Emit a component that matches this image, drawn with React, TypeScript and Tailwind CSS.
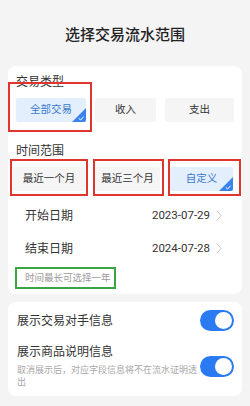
import React from "react";

const font = { fontFamily: "Roboto, 'Noto Sans CJK SC', sans-serif" };

const Corner = () => (
  <svg className="absolute bottom-0 right-0" width="14" height="14" viewBox="0 0 14 14">
    <polygon points="14,0 14,14 0,14" fill="#3a82f0" />
    <path d="M7 10.6 L8.6 12 L11.4 9" stroke="#fff" strokeWidth="1" fill="none" strokeLinecap="round" strokeLinejoin="round" />
  </svg>
);

const Chip = ({ label, active }: { label: string; active?: boolean }) => (
  <div
    className={
      "relative h-[24px] flex items-center justify-center text-[10.5px] rounded-[2px] overflow-hidden " +
      (active ? "bg-[#e4effd] text-[#3b78cc]" : "bg-[#f5f5f5] text-[#333]")
    }
  >
    {label}
    {active && <Corner />}
  </div>
);

const Toggle = () => (
  <div className="w-[34px] h-[21px] rounded-full bg-[#2a7bf2] flex items-center justify-end px-[2px] shrink-0">
    <div className="w-[17px] h-[17px] rounded-full bg-white" />
  </div>
);

const DateRow = ({ label, value }: { label: string; value: string }) => (
  <div className="h-[33px] flex items-center justify-between pl-[17px] pr-[20px]">
    <span className="text-[12px] text-[#333]">{label}</span>
    <div className="flex items-center gap-[6px]">
      <span className="text-[11.5px] text-[#333]">{value}</span>
      <svg width="6" height="11" viewBox="0 0 6 11">
        <path d="M0.6 0.6 L5.2 5.5 L0.6 10.4" stroke="#c8c8c8" strokeWidth="1" fill="none" />
      </svg>
    </div>
  </div>
);

export default function App() {
  return (
    <div className="w-[250px] h-[406px] bg-[#f4f4f4] overflow-hidden" style={font}>
      <div className="pt-[25px] text-center text-[15px] leading-[20px] text-[#222] font-medium">选择交易流水范围</div>

      <div className="relative mx-[8px] mt-[21px] bg-white rounded-[8px] pt-[8px] pb-[5px]">
        <div className="pl-[8px] text-[12px] leading-[16px] text-[#333]">交易类型</div>
        <div className="mt-[8px] ml-[8px] grid grid-cols-[70px_61px_69px] gap-[9px]">
          <Chip label="全部交易" active />
          <Chip label="收入" />
          <Chip label="支出" />
        </div>

        <div className="mt-[21px] pl-[8px] text-[12px] leading-[16px] text-[#333]">时间范围</div>
        <div className="mt-[8px] ml-[5px] grid grid-cols-[72px_65px_63px] gap-[10px]">
          <Chip label="最近一个月" />
          <Chip label="最近三个月" />
          <Chip label="自定义" active />
        </div>

        <div className="mt-[8px]">
          <DateRow label="开始日期" value="2023-07-29" />
          <DateRow label="结束日期" value="2024-07-28" />
        </div>

        <div className="mt-[2px] ml-[7px] w-[101px] h-[22px] border-2 border-[#3aa545] flex items-center pl-[8px] text-[9.5px] text-[#9a9a9a]">
          时间最长可选择一年
        </div>

        {/* annotation boxes */}
        <div className="absolute left-0 top-[16px] w-[84px] h-[50px] border-2 border-[#e0342f]" />
        <div className="absolute left-[2px] top-[93px] w-[78px] h-[37px] border-2 border-[#e0342f]" />
        <div className="absolute left-[85px] top-[93px] w-[71px] h-[37px] border-2 border-[#e0342f]" />
        <div className="absolute left-[160px] top-[93px] w-[73px] h-[37px] border-2 border-[#e0342f]" />
      </div>

      <div className="mx-[8px] mt-[8px] bg-white rounded-[8px] pt-[8px] pb-[8px] pl-[9px] pr-[8px]">
        <div className="h-[21px] flex items-center justify-between">
          <span className="text-[12px] text-[#333]">展示交易对手信息</span>
          <Toggle />
        </div>
        <div className="mt-[13px] flex items-center justify-between">
          <div className="w-[181px]">
            <div className="text-[12px] leading-[16px] text-[#333]">展示商品说明信息</div>
            <div className="mt-[4px] text-[9px] leading-[12px] text-[#a8a8a8]">
              取消展示后，对应字段信息将不在流水证明透
              <br />出
            </div>
          </div>
          <Toggle />
        </div>
      </div>
    </div>
  );
}
